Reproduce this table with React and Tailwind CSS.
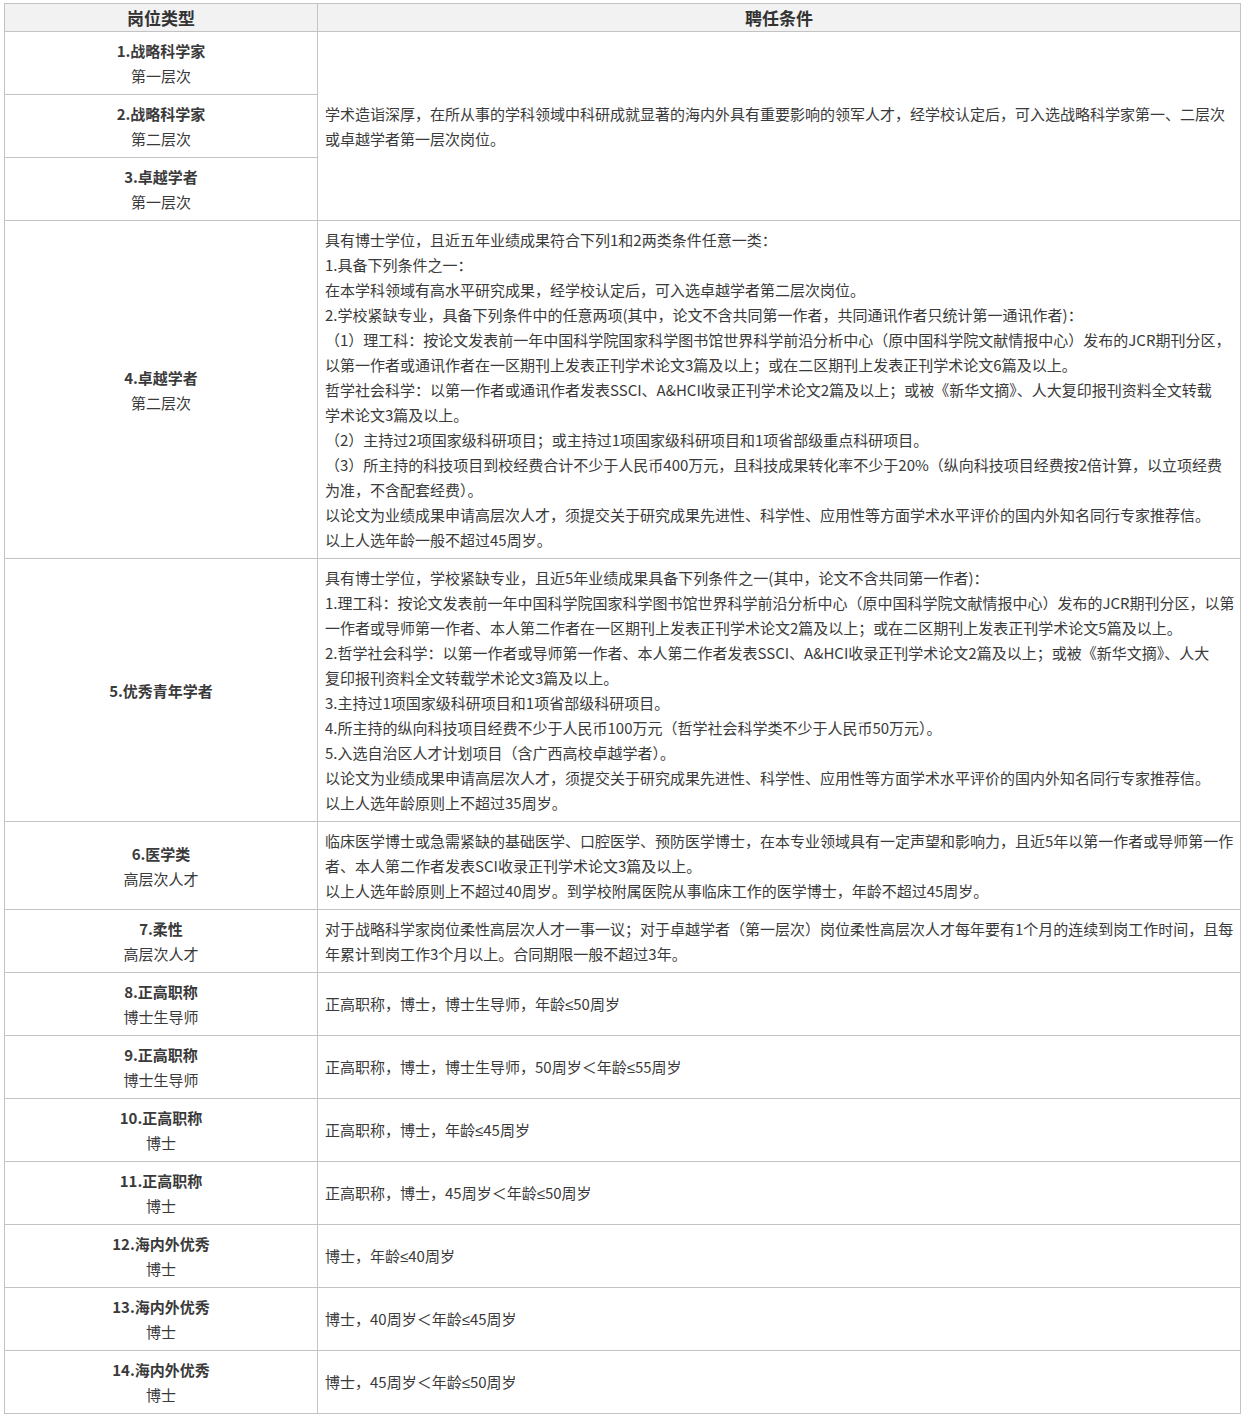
import React from 'react';

const font = { fontFamily: '"Noto Sans CJK SC", "Noto Sans", sans-serif' };

const topCondition = [
  '学术造诣深厚，在所从事的学科领域中科研成就显著的海内外具有重要影响的领军人才，经学校认定后，可入选战略科学家第一、二层次',
  '或卓越学者第一层次岗位。',
];

const rows = [
  {
    title: '4.卓越学者',
    sub: '第二层次',
    lines: [
      '具有博士学位，且近五年业绩成果符合下列1和2两类条件任意一类：',
      '1.具备下列条件之一：',
      '在本学科领域有高水平研究成果，经学校认定后，可入选卓越学者第二层次岗位。',
      '2.学校紧缺专业，具备下列条件中的任意两项(其中，论文不含共同第一作者，共同通讯作者只统计第一通讯作者)：',
      '（1）理工科：按论文发表前一年中国科学院国家科学图书馆世界科学前沿分析中心（原中国科学院文献情报中心）发布的JCR期刊分区，',
      '以第一作者或通讯作者在一区期刊上发表正刊学术论文3篇及以上；或在二区期刊上发表正刊学术论文6篇及以上。',
      '哲学社会科学：以第一作者或通讯作者发表SSCI、A&HCI收录正刊学术论文2篇及以上；或被《新华文摘》、人大复印报刊资料全文转载',
      '学术论文3篇及以上。',
      '（2）主持过2项国家级科研项目；或主持过1项国家级科研项目和1项省部级重点科研项目。',
      '（3）所主持的科技项目到校经费合计不少于人民币400万元，且科技成果转化率不少于20%（纵向科技项目经费按2倍计算，以立项经费',
      '为准，不含配套经费）。',
      '以论文为业绩成果申请高层次人才，须提交关于研究成果先进性、科学性、应用性等方面学术水平评价的国内外知名同行专家推荐信。',
      '以上人选年龄一般不超过45周岁。',
    ],
  },
  {
    title: '5.优秀青年学者',
    lines: [
      '具有博士学位，学校紧缺专业，且近5年业绩成果具备下列条件之一(其中，论文不含共同第一作者)：',
      '1.理工科：按论文发表前一年中国科学院国家科学图书馆世界科学前沿分析中心（原中国科学院文献情报中心）发布的JCR期刊分区，以第',
      '一作者或导师第一作者、本人第二作者在一区期刊上发表正刊学术论文2篇及以上；或在二区期刊上发表正刊学术论文5篇及以上。',
      '2.哲学社会科学：以第一作者或导师第一作者、本人第二作者发表SSCI、A&HCI收录正刊学术论文2篇及以上；或被《新华文摘》、人大',
      '复印报刊资料全文转载学术论文3篇及以上。',
      '3.主持过1项国家级科研项目和1项省部级科研项目。',
      '4.所主持的纵向科技项目经费不少于人民币100万元（哲学社会科学类不少于人民币50万元）。',
      '5.入选自治区人才计划项目（含广西高校卓越学者）。',
      '以论文为业绩成果申请高层次人才，须提交关于研究成果先进性、科学性、应用性等方面学术水平评价的国内外知名同行专家推荐信。',
      '以上人选年龄原则上不超过35周岁。',
    ],
  },
  {
    title: '6.医学类',
    sub: '高层次人才',
    lines: [
      '临床医学博士或急需紧缺的基础医学、口腔医学、预防医学博士，在本专业领域具有一定声望和影响力，且近5年以第一作者或导师第一作',
      '者、本人第二作者发表SCI收录正刊学术论文3篇及以上。',
      '以上人选年龄原则上不超过40周岁。到学校附属医院从事临床工作的医学博士，年龄不超过45周岁。',
    ],
  },
  {
    title: '7.柔性',
    sub: '高层次人才',
    lines: [
      '对于战略科学家岗位柔性高层次人才一事一议；对于卓越学者（第一层次）岗位柔性高层次人才每年要有1个月的连续到岗工作时间，且每',
      '年累计到岗工作3个月以上。合同期限一般不超过3年。',
    ],
  },
  { title: '8.正高职称', sub: '博士生导师', lines: ['正高职称，博士，博士生导师，年龄≤50周岁'] },
  { title: '9.正高职称', sub: '博士生导师', lines: ['正高职称，博士，博士生导师，50周岁＜年龄≤55周岁'] },
  { title: '10.正高职称', sub: '博士', lines: ['正高职称，博士，年龄≤45周岁'] },
  { title: '11.正高职称', sub: '博士', lines: ['正高职称，博士，45周岁＜年龄≤50周岁'] },
  { title: '12.海内外优秀', sub: '博士', lines: ['博士，年龄≤40周岁'] },
  { title: '13.海内外优秀', sub: '博士', lines: ['博士，40周岁＜年龄≤45周岁'] },
  { title: '14.海内外优秀', sub: '博士', lines: ['博士，45周岁＜年龄≤50周岁'] },
];

// the ≤ sign is narrow in the original, so set it in a latin face
const Line = ({ text }) => {
  const parts = text.split('≤');
  return (
    <div className="whitespace-nowrap">
      {parts.map((p, i) => (
        <React.Fragment key={i}>
          {i > 0 && <span className="font-['Liberation_Sans',sans-serif]">≤</span>}
          {p}
        </React.Fragment>
      ))}
    </div>
  );
};

const TitleCell = ({ title, sub }) => (
  <td className="border border-[#c3c3c3] py-[6px] text-center align-middle">
    <div className="font-bold">{title}</div>
    {sub && <div>{sub}</div>}
  </td>
);

const LinesCell = ({ lines, rowSpan }) => (
  <td rowSpan={rowSpan} className="border border-[#c3c3c3] py-[6px] px-[7px] align-middle">
    {lines.map((l, i) => (
      <Line key={i} text={l} />
    ))}
  </td>
);

export default function App() {
  return (
    <div className="bg-white w-[1244px] min-h-[1417px] pt-[3px] pl-[4px]" style={font}>
      <table className="border-collapse w-[1237px] text-[15px] leading-[25px] text-[#3a3a3a] table-fixed">
        <colgroup>
          <col className="w-[313px]" />
          <col />
        </colgroup>
        <thead>
          <tr className="bg-[#f2f2f2]">
            <th className="border border-[#c3c3c3] h-[28px] p-0 text-[17px] leading-[27px] font-bold text-[#333]">岗位类型</th>
            <th className="border border-[#c3c3c3] h-[28px] p-0 text-[17px] leading-[27px] font-bold text-[#333]">聘任条件</th>
          </tr>
        </thead>
        <tbody>
          <tr>
            <TitleCell title="1.战略科学家" sub="第一层次" />
            <LinesCell lines={topCondition} rowSpan={3} />
          </tr>
          <tr>
            <TitleCell title="2.战略科学家" sub="第二层次" />
          </tr>
          <tr>
            <TitleCell title="3.卓越学者" sub="第一层次" />
          </tr>
          {rows.map((r) => (
            <tr key={r.title}>
              <TitleCell title={r.title} sub={r.sub} />
              <LinesCell lines={r.lines} />
            </tr>
          ))}
        </tbody>
      </table>
    </div>
  );
}
